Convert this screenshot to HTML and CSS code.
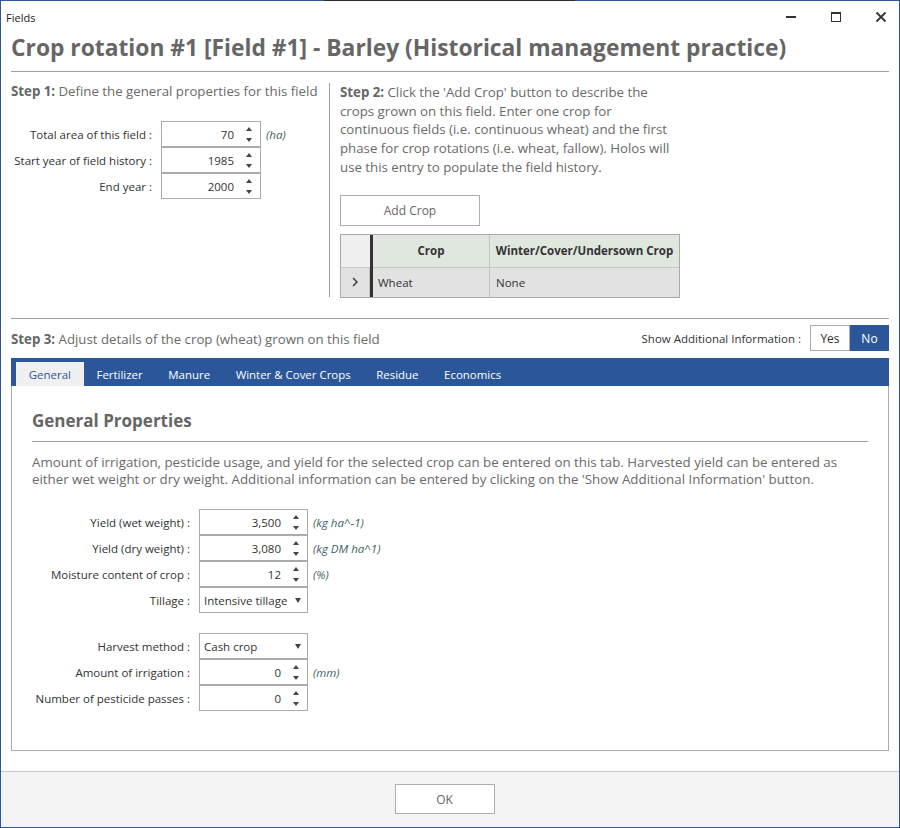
FILE: index.html
```html
<!DOCTYPE html>
<html>
<head>
<meta charset="utf-8">
<link rel="stylesheet" href="styles.css">
</head>
<body>
<div class="window">
  <div class="topedge"></div>
  <div class="titlebar">
    <span class="wtitle">Fields</span>
    <div class="wctrls">
      <svg class="wc" width="12" height="12" viewBox="0 0 12 12"><rect x="1" y="5" width="10" height="2" fill="#333"/></svg>
      <svg class="wc" width="12" height="12" viewBox="0 0 12 12"><rect x="1.5" y="1.5" width="9" height="9" fill="none" stroke="#333" stroke-width="1"/><rect x="1" y="1" width="10" height="2" fill="#333"/></svg>
      <svg class="wc" width="12" height="12" viewBox="0 0 12 12"><path d="M1.5 1.5 L10.5 10.5 M10.5 1.5 L1.5 10.5" stroke="#333" stroke-width="1.8"/></svg>
    </div>
  </div>

  <div class="main">
    <h1 class="heading">Crop rotation #1 [Field #1] - Barley (Historical management practice)</h1>
    <div class="rule"></div>

    <div class="steps">
      <div class="step1">
        <p class="steptext"><b>Step 1:</b> Define the general properties for this field</p>
        <div class="form f1">
          <div class="frow">
            <label>Total area of this field :</label>
            <div class="spin w100"><span class="val">70</span><span class="arrows"><i class="up"></i><i class="dn"></i></span></div>
            <span class="unit">(ha)</span>
          </div>
          <div class="frow">
            <label>Start year of field history :</label>
            <div class="spin w100"><span class="val">1985</span><span class="arrows"><i class="up"></i><i class="dn"></i></span></div>
          </div>
          <div class="frow">
            <label>End year :</label>
            <div class="spin w100"><span class="val">2000</span><span class="arrows"><i class="up"></i><i class="dn"></i></span></div>
          </div>
        </div>
      </div>
      <div class="vdiv"></div>
      <div class="step2">
        <p class="steptext lh"><b>Step 2:</b> Click the 'Add Crop' button to describe the<br>crops grown on this field. Enter one crop for<br>continuous fields (i.e. continuous wheat) and the first<br>phase for crop rotations (i.e. wheat, fallow). Holos will<br>use this entry to populate the field history.</p>
        <button class="btn addcrop">Add Crop</button>
        <div class="grid">
          <div class="gc rh hd"></div>
          <div class="gc thick"></div>
          <div class="gc hd ctr">Crop</div>
          <div class="gc hd ctr last">Winter/Cover/Undersown Crop</div>
          <div class="gc rh sel"><svg width="8" height="10" viewBox="0 0 8 10"><path d="M2 1 L6 5 L2 9" fill="none" stroke="#333" stroke-width="1.4"/></svg></div>
          <div class="gc thick"></div>
          <div class="gc sel">Wheat</div>
          <div class="gc sel last">None</div>
        </div>
      </div>
    </div>

    <div class="rule r2"></div>

    <div class="step3bar">
      <p class="steptext"><b>Step 3:</b> Adjust details of the crop (wheat) grown on this field</p>
      <div class="showinfo">
        <span class="silabel">Show Additional Information :</span>
        <div class="toggle"><span class="tg yes">Yes</span><span class="tg no">No</span></div>
      </div>
    </div>

    <div class="tabs">
      <span class="tab active">General</span>
      <span class="tab">Fertilizer</span>
      <span class="tab">Manure</span>
      <span class="tab">Winter &amp; Cover Crops</span>
      <span class="tab">Residue</span>
      <span class="tab">Economics</span>
    </div>
    <div class="panel">
      <h2 class="ptitle">General Properties</h2>
      <div class="rule r3"></div>
      <p class="pdesc">Amount of irrigation, pesticide usage, and yield for the selected crop can be entered on this tab. Harvested yield can be entered as<br>either wet weight or dry weight. Additional information can be entered by clicking on the 'Show Additional Information' button.</p>
      <div class="form f2">
        <div class="frow">
          <label>Yield (wet weight) :</label>
          <div class="spin w109"><span class="val">3,500</span><span class="arrows"><i class="up"></i><i class="dn"></i></span></div>
          <span class="unit">(kg ha^-1)</span>
        </div>
        <div class="frow">
          <label>Yield (dry weight) :</label>
          <div class="spin w109"><span class="val">3,080</span><span class="arrows"><i class="up"></i><i class="dn"></i></span></div>
          <span class="unit">(kg DM ha^1)</span>
        </div>
        <div class="frow">
          <label>Moisture content of crop :</label>
          <div class="spin w109"><span class="val">12</span><span class="arrows"><i class="up"></i><i class="dn"></i></span></div>
          <span class="unit">(%)</span>
        </div>
        <div class="frow">
          <label>Tillage :</label>
          <div class="combo w109"><span class="cval">Intensive tillage</span><i class="dd"></i></div>
        </div>
        <div class="frow gap">
          <label>Harvest method :</label>
          <div class="combo w109"><span class="cval">Cash crop</span><i class="dd"></i></div>
        </div>
        <div class="frow">
          <label>Amount of irrigation :</label>
          <div class="spin w109"><span class="val">0</span><span class="arrows"><i class="up"></i><i class="dn"></i></span></div>
          <span class="unit">(mm)</span>
        </div>
        <div class="frow">
          <label>Number of pesticide passes :</label>
          <div class="spin w109"><span class="val">0</span><span class="arrows"><i class="up"></i><i class="dn"></i></span></div>
        </div>
      </div>
    </div>
  </div>

  <div class="footer">
    <button class="btn ok">OK</button>
  </div>
</div>
</body>
</html>
```
FILE: styles.css
```css
html, body {
  margin: 0;
  padding: 0;
  background: #ffffff;
}
body {
  font-family: "Open Sans", "Noto Sans", sans-serif;
  color: #333;
}
.window {
  width: 900px;
  height: 828px;
  box-sizing: border-box;
  border: 1px solid #2b579a;
  border-top: none;
  display: flex;
  flex-direction: column;
  background: #fff;
}
.topedge {
  height: 1px;
  background: linear-gradient(to right, #2b579a 0, #2b579a 324px, #2b2b2b 324px, #2b2b2b 575px, #2b579a 575px);
  margin: 0 -1px;
}
.titlebar {
  height: 31px;
  display: flex;
  align-items: center;
  justify-content: space-between;
  padding-left: 5px;
}
.wtitle {
  font-size: 11px;
  color: #222;
  margin-top: 1px;
}
.wctrls {
  display: flex;
  gap: 33px;
  padding-right: 12px;
  margin-top: 1px;
}
.wc { display: block; }

.main {
  padding: 0 10px;
  flex: 1;
  display: flex;
  flex-direction: column;
}
.heading {
  margin: 0;
  font-size: 22.8px;
  font-weight: 700;
  line-height: 32px;
  color: #666;
  letter-spacing: 0;
  white-space: nowrap;
}
.rule {
  height: 1px;
  background: #a0a0a0;
  margin-top: 7px;
}
.steps {
  display: flex;
  height: 246px;
}
.step1 {
  width: 318px;
}
.vdiv {
  width: 1px;
  background: #a0a0a0;
  margin-top: 11px;
  height: 214px;
}
.step2 {
  padding-left: 10px;
}
.steptext {
  margin: 10px 0 0 0;
  font-size: 13.25px;
  color: #6a6a6a;
  line-height: 19px;
  white-space: nowrap;
}
.steptext b {
  font-weight: 700;
  color: #666;
}
.steptext.lh { line-height: 18.7px; margin-top: 11px; }

.form { display: flex; flex-direction: column; }
.f1 { margin-top: 20px; }
.frow {
  display: flex;
  align-items: center;
  height: 26px;
}
.frow label {
  font-size: 11.5px;
  color: #333;
  text-align: right;
  white-space: nowrap;
}
.f1 .frow label { width: 141px; padding-right: 9px; }
.spin, .combo {
  box-sizing: border-box;
  height: 26px;
  border: 1px solid #ababab;
  display: flex;
  align-items: center;
  background: #fff;
  font-size: 11.5px;
  color: #333;
}
.w100 { width: 100px; }
.w109 { width: 109px; }
.val {
  flex: 1;
  text-align: right;
  padding-right: 8px;
}
.arrows {
  width: 14px;
  height: 24px;
  display: flex;
  flex-direction: column;
  justify-content: space-between;
  align-items: center;
  padding: 5px 0 4px;
  box-sizing: border-box;
  margin-right: 4px;
}
.arrows i { display: block; width: 0; height: 0; }
.arrows .up {
  border-left: 3px solid transparent;
  border-right: 3px solid transparent;
  border-bottom: 4px solid #444;
}
.arrows .dn {
  border-left: 3px solid transparent;
  border-right: 3px solid transparent;
  border-top: 4px solid #444;
}
.unit {
  font-size: 11.5px;
  font-style: italic;
  color: #3d6363;
  margin-left: 5px;
}
.combo { padding: 0 0 0 4px; }
.cval { flex: 1; white-space: nowrap; }
.dd {
  display: block;
  width: 0; height: 0;
  border-left: 3px solid transparent;
  border-right: 3px solid transparent;
  border-top: 5px solid #444;
  margin-right: 6px;
}

.btn {
  font-family: inherit;
  background: #fff;
  border: 1px solid #adadad;
  color: #666;
  font-size: 12px;
  padding: 0;
}
.addcrop {
  margin-top: 18px;
  width: 140px;
  height: 31px;
  display: block;
}
.grid {
  margin-top: 8px;
  width: 340px;
  box-sizing: border-box;
  border: 1px solid #aaa;
  display: grid;
  grid-template-columns: 29px 3px 117px 1fr;
  grid-template-rows: 33px 29px;
}
.gc {
  display: flex;
  align-items: center;
  font-size: 11.5px;
  color: #333;
  padding-left: 5px;
  box-sizing: border-box;
}
.gc.rh { padding-left: 0; justify-content: center; border-right: none; background: #f0f0f0; border-bottom: 1px solid #c8c8c8; }
.gc.thick { background: #333; padding: 0; }
.gc.hd { background: #dfe7df; font-weight: 700; color: #333; border-bottom: 1px solid #c8c8c8; }
.gc.rh.hd { background: #f0f0f0; }
.gc.ctr { justify-content: center; padding-left: 0; }
.gc:nth-child(3), .gc:nth-child(7) { border-right: 1px solid #c4c4c4; }
.gc.sel { background: #e2e2e2; border-bottom: none; }
.gc.rh.sel { background: #e2e2e2; border-right: 1px solid #c4c4c4; }
.gc.last { padding-left: 6px; }
.gc.hd.last { padding-left: 0; }

.r2 { margin-top: 0; }
.step3bar {
  display: flex;
  justify-content: space-between;
  align-items: center;
  height: 39px;
}
.step3bar .steptext { margin: 2px 0 0 0; }
.showinfo { display: flex; align-items: center; margin-top: -1px; }
.silabel { font-size: 11.5px; color: #333; margin-right: 9px; }
.toggle { display: flex; }
.tg {
  box-sizing: border-box;
  height: 26px;
  width: 40px;
  display: flex;
  align-items: center;
  justify-content: center;
  font-size: 12px;
}
.tg.yes { border: 1px solid #ababab; color: #333; background: #fff; }
.tg.no { background: #2b579a; color: #fff; width: 39px; }

.tabs {
  height: 28px;
  background: #2b579a;
  display: flex;
  align-items: flex-end;
  padding-left: 5px;
}
.tab {
  height: 24px;
  padding: 0 12.8px;
  display: flex;
  align-items: center;
  color: #fff;
  font-size: 11.45px;
  white-space: nowrap;
}
.tab.active {
  background: #f0f0f0;
  color: #2b579a;
}
.panel {
  height: 365px;
  box-sizing: border-box;
  border: 1px solid #aaa;
  border-top: none;
  padding: 0 20px;
}
.ptitle {
  margin: 22px 0 0 0;
  font-size: 17px;
  font-weight: 700;
  color: #666;
  line-height: 26px;
}
.r3 { margin-top: 7px; }
.pdesc {
  margin: 12px 0 0 0;
  font-size: 13.3px;
  color: #6a6a6a;
  line-height: 17px;
  white-space: nowrap;
}
.f2 { margin-top: 21px; }
.f2 .frow label { width: 158px; padding-right: 9px; }
.frow.gap { margin-top: 20px; }

.footer {
  height: 55px;
  border-top: 1px solid #c6c6c6;
  background: #f3f3f3;
  display: flex;
  justify-content: center;
  margin-top: 20px;
}
.ok {
  margin-top: 12px;
  width: 100px;
  height: 30px;
  margin-left: -11px;
}
```
